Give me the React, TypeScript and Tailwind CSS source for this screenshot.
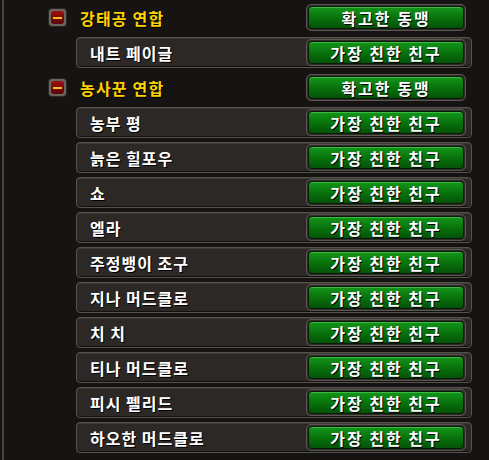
const groups = [
  { name: '강태공 연합', members: ['내트 페이글'] },
  {
    name: '농사꾼 연합',
    members: ['농부 평', '늙은 힐포우', '쇼', '엘라', '주정뱅이 조구', '지나 머드클로', '치 치', '티나 머드클로', '피시 펠리드', '하오한 머드클로'],
  },
];

const font = { fontFamily: '"Noto Sans CJK KR", "Noto Sans", sans-serif' };

const StandingButton = ({ label }: { label: string }) => (
  <div className="w-[160px] h-[27px] rounded-[5px] bg-[#2f2d29] border border-[#5a5750] p-[1px] shrink-0">
    <div className="h-full rounded-[4px] border border-[#0a1a08] bg-gradient-to-b from-[#14961a] via-[#08740c] to-[#045208] flex items-center justify-center shadow-[inset_0_1px_0_rgba(140,255,140,0.35)]">
      <span className="text-white font-bold text-[16px] leading-none tracking-[2px] [text-shadow:1px_1px_0_#000]">
        {label}
      </span>
    </div>
  </div>
);

const CollapseIcon = () => (
  <div className="w-[19px] h-[19px] rounded-[4px] bg-[#6a665e] border border-[#2a2825] p-[2px]">
    <div className="h-full rounded-[3px] bg-gradient-to-b from-[#a01010] to-[#5a0404] flex items-center justify-center">
      <div className="w-[9px] h-[2px] bg-[#f2c21a]" />
    </div>
  </div>
);

const App = () => {
  return (
    <div className="w-[489px] h-[460px] overflow-hidden bg-[#151413] relative" style={font}>
      <div className="absolute left-[2px] top-0 bottom-0 w-[2px] bg-[#4a473e]" />
      <div className="flex flex-col pl-[48px] pr-[17px]">
        {groups.map((g) => (
          <div key={g.name} className="flex flex-col">
            <div className="h-[35px] flex items-center">
              <CollapseIcon />
              <span className="ml-[13px] text-[#ffd100] font-bold text-[16px] leading-none tracking-[1.2px] [text-shadow:1px_1px_0_#000] flex-1">
                {g.name}
              </span>
              <div className="mr-[6px]">
                <StandingButton label="확고한 동맹" />
              </div>
            </div>
            {g.members.map((m) => (
              <div key={m} className="h-[35px] flex items-center">
                <div className="ml-[28px] flex-1 h-[31px] rounded-[4px] border border-[#57534b] bg-[#2b2825] shadow-[inset_0_1px_0_rgba(255,255,255,0.08),inset_0_-1px_0_rgba(0,0,0,0.6)] flex items-center pl-[13px] pr-[5px]">
                  <span className="flex-1 text-white font-bold text-[16px] leading-none tracking-[1px] [text-shadow:1px_1px_0_#000]">
                    {m}
                  </span>
                  <StandingButton label="가장 친한 친구" />
                </div>
              </div>
            ))}
          </div>
        ))}
      </div>
    </div>
  );
};

export default App;
